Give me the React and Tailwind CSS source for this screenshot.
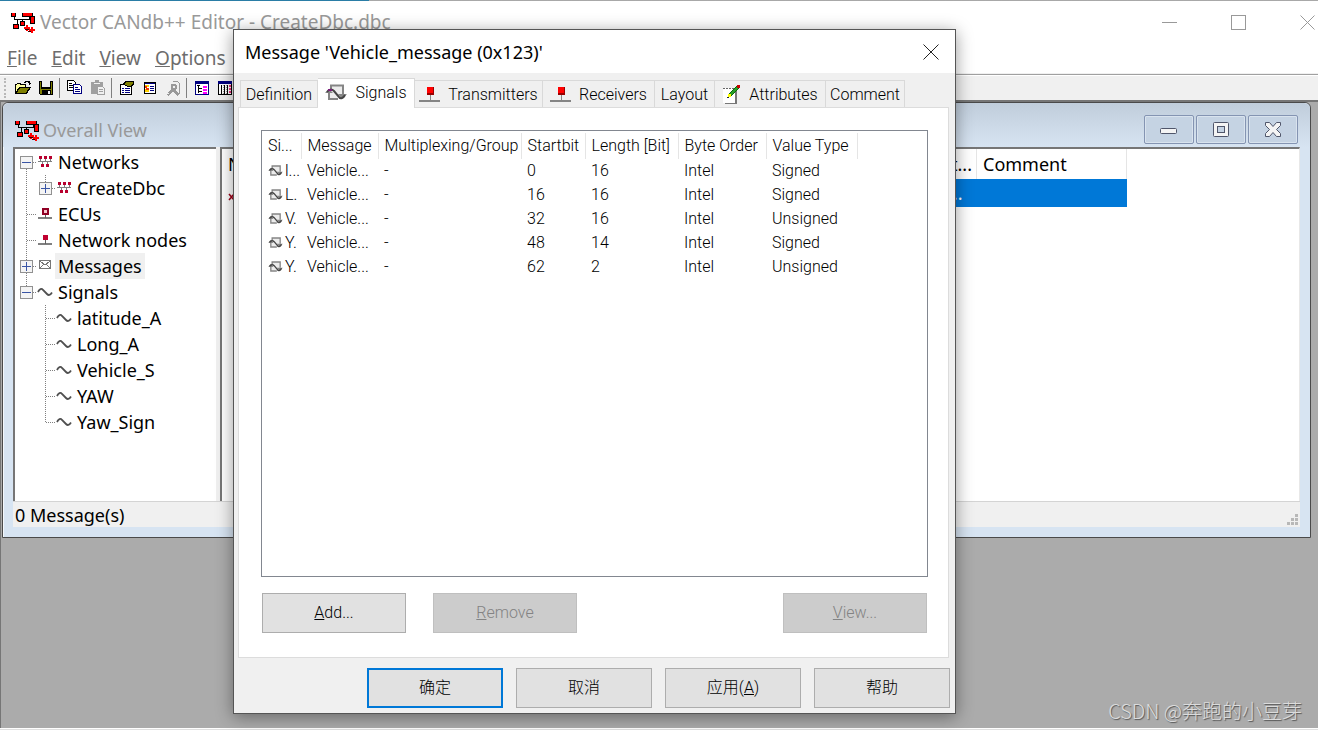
import { useState } from 'react';

const signals = [
  { id: 1, name: 'l...', startbit: 0, length: 16, order: 'Intel', type: 'Signed' },
  { id: 2, name: 'L.', startbit: 16, length: 16, order: 'Intel', type: 'Signed' },
  { id: 3, name: 'V.', startbit: 32, length: 16, order: 'Intel', type: 'Unsigned' },
  { id: 4, name: 'Y.', startbit: 48, length: 14, order: 'Intel', type: 'Signed' },
  { id: 5, name: 'Y.', startbit: 62, length: 2, order: 'Intel', type: 'Unsigned' },
];

const columns = [
  { label: 'Si...', width: 'w-[39px]' },
  { label: 'Message', width: 'w-[77px]' },
  { label: 'Multiplexing/Group', width: 'w-[143px]' },
  { label: 'Startbit', width: 'w-16' },
  { label: 'Length [Bit]', width: 'w-[93px]' },
  { label: 'Byte Order', width: 'w-[88px]' },
  { label: 'Value Type', width: 'w-[91px]' },
];

// guides: one entry per indent cell. up/down = trunk, right = branch, box = expander
const tree = [
  { label: 'Networks', icon: 'network', guides: [{ down: true, right: true, box: '-' }] },
  { label: 'CreateDbc', icon: 'network', guides: [{ up: true, down: true }, { up: true, right: true, box: '+' }] },
  { label: 'ECUs', icon: 'ecu', guides: [{ up: true, down: true, right: true }] },
  { label: 'Network nodes', icon: 'node', guides: [{ up: true, down: true, right: true }] },
  { label: 'Messages', icon: 'mail', selected: true, guides: [{ up: true, down: true, right: true, box: '+' }] },
  { label: 'Signals', icon: 'wave', guides: [{ up: true, right: true, box: '-' }] },
  { label: 'latitude_A', icon: 'wave', guides: [{}, { up: true, down: true, right: true }] },
  { label: 'Long_A', icon: 'wave', guides: [{}, { up: true, down: true, right: true }] },
  { label: 'Vehicle_S', icon: 'wave', guides: [{}, { up: true, down: true, right: true }] },
  { label: 'YAW', icon: 'wave', guides: [{}, { up: true, down: true, right: true }] },
  { label: 'Yaw_Sign', icon: 'wave', guides: [{}, { up: true, right: true }] },
];

const AppIcon = () => (
  <svg width="25" height="21" viewBox="0 0 25 21" shapeRendering="crispEdges" className="shrink-0">
    <path d="M3 5v2h15v-2M6 7v5M11 7v4M18 7h2v-2" fill="none" stroke="#000" />
    <g fill="#000">
      <rect x="0" y="1" width="5" height="4" />
      <rect x="11" y="1" width="11" height="4" />
      <rect x="19" y="4" width="5" height="8" />
      <rect x="2" y="12" width="6" height="5" />
      <rect x="9" y="9" width="5" height="5" />
    </g>
    <g fill="#f00">
      <rect x="1" y="1" width="3" height="3" />
      <rect x="12" y="1" width="9" height="3" />
      <rect x="20" y="5" width="3" height="6" />
      <rect x="3" y="13" width="4" height="3" />
      <rect x="10" y="10" width="3" height="3" />
      <path d="M13 15h6v2h-6zM15 13h2v6h-2zM18 17h6v2h-6zM20 15h2v6h-2z" />
    </g>
    <path d="M14 17h4M17 19h3" stroke="#300" />
  </svg>
);

const TreeIcon = ({ name }) => (
  <svg width="19" height="26" viewBox="0 0 19 26" shapeRendering={name === 'wave' ? 'auto' : 'crispEdges'} className="shrink-0">
    {name === 'network' && (
      <>
        <path d="M2 12.500h14M4.500 9v4M9.500 9v4M14.500 9v4M6.500 13v4M11.500 13v4" stroke="#808080" fill="none" />
        <path d="M3 7h3v3H3zM8 7h3v3H8zM13 7h3v3h-3zM5 15h3v3H5zM10 15h3v3h-3z" fill="#b8002e" />
      </>
    )}
    {name === 'ecu' && (
      <>
        <path d="M2 17h14" stroke="#808080" strokeWidth="2" />
        <path d="M9.500 14v3" stroke="#606060" />
        <rect x="6" y="7" width="7" height="7" fill="#900024" />
        <rect x="8" y="9" width="3" height="3" fill="#f4c8d0" />
      </>
    )}
    {name === 'node' && (
      <>
        <path d="M2 17h14" stroke="#808080" strokeWidth="2" />
        <path d="M9.500 13v4" stroke="#606060" />
        <rect x="7" y="8" width="5" height="5" fill="#c00030" />
      </>
    )}
    {name === 'mail' && (
      <g fill="none" stroke="#777">
        <rect x="3.500" y="7.500" width="11" height="8" />
        <path d="M4 8l5 4l5-4M4 15l4-4M14 15l-4-4" />
      </g>
    )}
    {name === 'wave' && (
      <path d="M2 13c1.500-3 3.500-4 5-2l4 4c1.500 1.500 3 1.500 5-1.500" fill="none" stroke="#505050" strokeWidth="1.800" />
    )}
  </svg>
);

const Guide = ({ up, down, right, box }) => (
  <svg width="19" height="26" viewBox="0 0 19 26" shapeRendering="crispEdges" className="shrink-0">
    <g stroke="#808080" strokeDasharray="1 1">
      {up && <path d="M9.500 0v13" />}
      {down && <path d="M9.500 14v12" />}
      {right && <path d="M10 13.500h9" />}
    </g>
    {box && (
      <>
        <rect x="3.500" y="7.500" width="12" height="12" rx="1" fill="#f4f4f4" stroke="#919191" />
        <path d={box === '+' ? 'M5 13.500h9M9.500 9v9' : 'M5 13.500h9'} stroke="#3a55a5" />
      </>
    )}
  </svg>
);

const SignalIcon = ({ large }) => (
  <svg width={large ? 22 : 15} height={large ? 18 : 12} viewBox="0 0 22 18" className="shrink-0">
    <path d="M4 15V6L6 1.500H18V13" fill="#ececec" />
    <path d="M4 8V15H13M5 1.500H18V10M6 1V5" fill="none" stroke="#858585" strokeWidth="2" />
    <path d="M0 9l4-4 4 4zM13 10h9l-5 5z" fill="#858585" />
    <path d="M2 8c2-3 5-3 7-1l5 6c1 2 4 2 6-2" fill="none" stroke="#444" strokeWidth="2" />
    {large && <path d="M3 6h4" stroke="#7c1d7c" strokeWidth="2" />}
  </svg>
);

const NodeIcon = () => (
  <svg width="21" height="16" viewBox="0 0 21 16" shapeRendering="crispEdges" className="shrink-0">
    <path d="M0 14h21" stroke="#858585" strokeWidth="2" />
    <path d="M11.500 8v5" stroke="#858585" />
    <rect x="8" y="0" width="7" height="8" fill="#900" />
    <rect x="8" y="0" width="6" height="6" fill="#f00" />
  </svg>
);

const AttributeIcon = () => (
  <svg width="19" height="19" viewBox="0 0 19 19" shapeRendering="crispEdges" className="shrink-0">
    <rect x="3" y="4" width="12" height="15" fill="#777" />
    <rect x="1" y="3" width="12" height="15" fill="#fff" />
    <path d="M1 3.500h11" stroke="#666" strokeDasharray="2 1" />
    <path d="M7 11L16 2" stroke="#0a6a0a" strokeWidth="4" />
    <path d="M8 10L16 2" stroke="#28a028" strokeWidth="2" />
    <path d="M6 9h3v3H6z" fill="#ff0" />
    <path d="M15 0h3v3h-3z" fill="#c00" />
    <path d="M5 12h2v1H5z" fill="#222" />
  </svg>
);

const tabs = [
  { label: 'Definition', width: 'w-[78px]' },
  { label: 'Signals', icon: <SignalIcon large />, width: 'w-[97px]' },
  { label: 'Transmitters', icon: <NodeIcon />, width: 'w-32' },
  { label: 'Receivers', icon: <NodeIcon />, width: 'w-28' },
  { label: 'Layout', width: 'w-[60px]' },
  { label: 'Attributes', icon: <AttributeIcon />, width: 'w-[111px]' },
  { label: 'Comment', width: 'w-[79px]' },
];

const tools = [
  {
    title: 'Open',
    art: (
      <>
        <path d="M0 14V4h2v-1h4v1h5v3h5l-4 7z" fill="#000" />
        <path d="M1 12V5h1v-1h3v1h5v2H4z" fill="#ffffa0" />
        <path d="M2 13l3-5h9l-3 5z" fill="#808000" />
        <path d="M9 2.500h1v-1h3v1h1v1h2M14.500 1v4" fill="none" stroke="#000" />
      </>
    ),
  },
  {
    title: 'Save',
    art: (
      <>
        <path d="M1 1h14v14H2l-1-1z" fill="#000" />
        <path d="M2 2h1v7h10V2h1v12H2z" fill="#808000" />
        <path d="M4 1h8v6H4z" fill="#f0f0f0" />
        <path d="M4 10h9v5H4z" fill="#000" />
        <path d="M10 11h2v3h-2z" fill="#f0f0f0" />
      </>
    ),
  },
  null,
  {
    title: 'Copy',
    art: (
      <>
        <path d="M.5.500h6l2 2v8h-8z" fill="#fff" stroke="#000" />
        <path d="M2 3.500h3M2 5.500h5M2 7.500h5" stroke="#000" />
        <path d="M6.500 4.500h6l2 2v7h-8z" fill="#fff" stroke="#000080" />
        <path d="M8 7.500h3M8 9.500h5M8 11.500h5" stroke="#000080" />
      </>
    ),
  },
  {
    title: 'Paste',
    art: (
      <>
        <path d="M1 2h4V0h4v2h4v12H1z" fill="#a0a0a0" />
        <path d="M4 3h6" stroke="#f0f0f0" />
        <path d="M7.500 6.500h5l2 2v6h-7z" fill="#f0f0f0" stroke="#a0a0a0" />
        <path d="M9 9.500h4M9 11.500h4" stroke="#a0a0a0" />
      </>
    ),
  },
  null,
  {
    title: 'Properties',
    art: (
      <>
        <path d="M1.500 4.500h11v10h-11z" fill="#fff" stroke="#000" />
        <path d="M3 8.500h2M6 8.500h5M3 10.500h2M6 10.500h5M3 12.500h2M6 12.500h5" stroke="#000080" />
        <path d="M3 4l3-3h9v4l-3 2H9z" fill="#000" />
        <path d="M5 4l2-2h7v2l-3 2H9z" fill="#808000" />
      </>
    ),
  },
  {
    title: 'List',
    art: (
      <>
        <path d="M2.500 2.500h11v11h-11z" fill="#fff" stroke="#000" />
        <path d="M3 3.500h10M8 6.500h4M8 8.500h4M8 10.500h4" stroke="#000080" />
        <path d="M3 5h4v2H3zM3 9h4v3H3z" fill="#ffd000" />
        <path d="M3 6h2v2h2v2H4z" fill="#f03000" />
      </>
    ),
  },
  {
    title: 'Tools',
    art: (
      <>
        <path d="M7.500 1.500h5l2 2v10h-5" fill="none" stroke="#999" />
        <path d="M6 4h4l2 2v3l-2 1 4 4-2 2-4-5-5 5-2-2 5-5z" fill="#999" />
        <path d="M8 6h2v2H8zM2 13h2v1H2z" fill="#f0f0f0" />
      </>
    ),
  },
  null,
  {
    title: 'Overall View',
    art: (
      <>
        <path d="M1.500 1.500h13v13h-13z" fill="#fff" stroke="#000080" />
        <path d="M1 2.500h14" stroke="#000080" strokeWidth="3" />
        <path d="M3 5.500h3M4.500 6v7M5 8.500h3M5 11.500h3" stroke="#000" />
        <path d="M9 6.500h4M9 9.500h4M9 12.500h4" stroke="#f0f" strokeWidth="2" />
      </>
    ),
  },
  {
    title: 'Value Tables',
    art: (
      <>
        <path d="M1.500 1.500h13v13h-13z" fill="#fff" stroke="#000" />
        <path d="M1 2.500h14" stroke="#000080" strokeWidth="3" />
        <path d="M4.500 5v9M7.500 5v9M10.500 5v9" stroke="#000" />
        <path d="M6 5v9M9 5v9" stroke="#999" strokeDasharray="1 1" />
        <path d="M13 5v9" stroke="#f03080" strokeWidth="2" strokeDasharray="2 1" />
      </>
    ),
  },
];

const Toolbar = () => (
  <div className="flex items-center h-6 pl-1 bg-[#f0f0f0] border-t border-white box-content">
    <div className="w-[7px] h-5 border-l-2 border-dotted border-[#b8b8b8]" />
    {tools.map((tool, i) => tool ? (
      <button key={tool.title} title={tool.title} className="w-[23px] h-6 flex items-center justify-center">
        <svg width="16" height="16" viewBox="0 0 16 16" shapeRendering="crispEdges">{tool.art}</svg>
      </button>
    ) : (
      <div key={i} className="w-px h-5 ml-[2px] mr-[3px] bg-[#808080]" />
    ))}
  </div>
);

const MainTitle = () => (
  <div className="flex items-center h-[43px] pl-[11px] pr-[3px]">
    <AppIcon />
    <h1 className="ml-1 text-[19px] text-[#999]">Vector CANdb++ Editor - CreateDbc.dbc</h1>
    <div className="ml-auto flex gap-[54px] text-[#999]">
      <button aria-label="Minimize"><svg width="15" height="15" viewBox="0 0 15 15"><path d="M0 7.500h15" stroke="currentColor" /></svg></button>
      <button aria-label="Maximize"><svg width="15" height="15" viewBox="0 0 15 15"><rect x=".5" y=".5" width="14" height="14" fill="none" stroke="currentColor" /></svg></button>
      <button aria-label="Close"><svg width="15" height="15" viewBox="0 0 15 15"><path d="M.5.500l14 14M14.500.500l-14 14" stroke="currentColor" /></svg></button>
    </div>
  </div>
);

const ChildButton = ({ label, children }) => (
  <button aria-label={label} className="w-[50px] h-[29px] flex items-center justify-center rounded-[2px] border border-[#8494b2] bg-[#c5d3e3] shadow-[inset_0_0_0_1px_#d9e3ee]">
    <svg width="18" height="17" viewBox="0 0 18 17" fill="#f4f4f4" stroke="#50566b">{children}</svg>
  </button>
);

const OverallView = () => (
  <section className="ml-px mr-[7px] rounded-t-md border border-[#4a4a4a] bg-[#d7e4f2] shadow-[inset_1px_1px_0_#f4f8fc]">
    <div className="flex items-center h-11 pl-[12px] pr-3 rounded-t-md bg-linear-to-b from-[#c0cddb] to-[#d7e4f2]">
      <div className="flex items-center pt-[10px]">
        <AppIcon />
        <h2 className="ml-[3px] text-lg text-[#999]">Overall View</h2>
      </div>
      <div className="ml-auto flex gap-[2px] pt-[9px]">
        <ChildButton label="Minimize child"><rect x=".5" y="7.500" width="16" height="5" rx="1" /></ChildButton>
        <ChildButton label="Restore child">
          <rect x="1.500" y="1.500" width="15" height="14" rx="1" />
          <rect x="5.500" y="5.500" width="7" height="6" fill="#c5d3e3" />
        </ChildButton>
        <ChildButton label="Close child">
          <path d="M1.500 1.500h4l3.500 4 3.500-4h4v3l-4 4 4 4v3h-4l-3.500-4-3.500 4h-4v-3l4-4-4-4z" strokeLinejoin="round" />
        </ChildButton>
      </div>
    </div>
    <div className="ml-[10px] mr-[10px] mb-[10px] bg-[#f0f0f0]">
      <div className="flex h-[354px]">
        <div className="w-[203px] shrink-0 pl-[2px] border-t-2 border-l-2 border-[#767676] bg-white">
          {tree.map(node => (
            <div key={node.label} className="flex items-center h-[26px]">
              {node.guides.map((g, i) => <Guide key={i} {...g} />)}
              <TreeIcon name={node.icon} />
              <span className={`px-[3px] text-lg leading-[26px] ${node.selected ? 'bg-[#f0f0f0]' : ''}`}>{node.label}</span>
            </div>
          ))}
        </div>
        <div className="flex-1 ml-1 border-t-2 border-l-2 border-[#767676] border-r border-r-[#e8e8e8] bg-white">
          <table className="table-fixed w-[905px] text-lg">
            <thead>
              <tr className="h-[30px]">
                <th className="w-[600px] pl-[6px] text-left font-normal">Name</th>
                <th className="pr-1 text-right font-normal border-r border-[#e5e5e5]">t...</th>
                <th className="w-[150px] pl-[6px] text-left font-normal border-r border-[#e5e5e5]">Comment</th>
              </tr>
            </thead>
            <tbody>
              <tr className="h-7 bg-[#0078d7] text-white">
                <td className="p-0 bg-white text-[#a00018]">
                  <svg width="14" height="28" viewBox="0 0 14 28"><path d="M7 15l5 6M12 15l-5 6" stroke="currentColor" strokeWidth="1.500" /></svg>
                </td>
                <td className="p-0 pr-[14px] text-right">...</td>
                <td />
              </tr>
            </tbody>
          </table>
        </div>
      </div>
      <div className="flex items-center justify-between h-[26px] pl-[2px] pr-[2px] border-t border-[#d4d4d4] text-lg">
        <span>0 Message(s)</span>
        <svg width="11" height="11" viewBox="0 0 11 11" fill="#b8b8b8" className="self-end mb-[2px]">
          <path d="M8 0h3v3H8zM4 4h3v3H4zM8 4h3v3H8zM0 8h3v3H0zM4 8h3v3H4zM8 8h3v3H8z" />
        </svg>
      </div>
    </div>
  </section>
);

const PushButton = ({ className, ...props }) => (
  <button
    className={`h-10 border bg-[#e1e1e1] border-[#adadad] disabled:bg-[#ccc] disabled:border-[#bfbfbf] disabled:text-[#838383] ${className}`}
    {...props}
  />
);

const MessageDialog = () => {
  const [active, setActive] = useState('Signals');

  return (
    <div
      role="dialog"
      aria-labelledby="dialog-title"
      className="absolute left-[233px] top-[29px] w-[723px] border border-[#555] bg-[#f0f0f0] shadow-[0_3px_16px_rgba(0,0,0,0.4)] font-[Roboto,'Noto_Sans_CJK_SC',sans-serif] text-base font-light"
    >
      <div className="flex items-center justify-between h-[43px] pl-[11px] pr-4 bg-white">
        <h2 id="dialog-title" className="font-['Noto_Sans',sans-serif] text-lg font-normal">Message 'Vehicle_message (0x123)'</h2>
        <button aria-label="Close dialog">
          <svg width="16" height="16" viewBox="0 0 16 16"><path d="M.5.500l15 15M15.500.500l-15 15" stroke="#222" /></svg>
        </button>
      </div>

      <div role="tablist" className="flex items-end h-[34px] pl-[6px]">
        {tabs.map(tab => (
          <button
            key={tab.label}
            role="tab"
            aria-selected={active === tab.label}
            onClick={() => setActive(tab.label)}
            className={`flex items-center justify-center border-r border-t border-[#d9d9d9] whitespace-nowrap ${tab.width} ${tab.icon ? 'gap-2' : ''} ${active === tab.label ? 'h-[30px] pb-[2px] bg-white relative top-px' : 'h-[27px] pt-px first:border-l'}`}
          >
            {tab.icon}
            {tab.label}
          </button>
        ))}
      </div>

      <div role="tabpanel" className="mx-1 mr-[6px] px-[22px] pr-5 pt-[22px] pb-6 border border-[#dcdcdc] bg-white">
        <div className="h-[447px] border border-[#828790]">
          <table className="table-fixed w-[595px] mt-[2px]">
            <thead>
              <tr className="h-[26px]">
                {columns.map(c => (
                  <th key={c.label} className={`p-0 pl-[6px] text-left font-light whitespace-nowrap border-r border-[#e5e5e5] ${c.width}`}>{c.label}</th>
                ))}
              </tr>
            </thead>
            <tbody>
              {signals.map(s => (
                <tr key={s.id} className="h-6">
                  <td className="p-0 pl-[6px]">
                    <div className="flex items-center gap-[2px]">
                      <SignalIcon />
                      {s.name}
                    </div>
                  </td>
                  <td className="p-0 pl-[6px]">Vehicle...</td>
                  <td className="p-0 pl-[6px]">-</td>
                  <td className="p-0 pl-[6px]">{s.startbit}</td>
                  <td className="p-0 pl-[6px]">{s.length}</td>
                  <td className="p-0 pl-[6px]">{s.order}</td>
                  <td className="p-0 pl-[6px]">{s.type}</td>
                </tr>
              ))}
            </tbody>
          </table>
        </div>
        <div className="flex mt-4 px-px">
          <PushButton className="w-36"><u>A</u>dd...</PushButton>
          <PushButton className="w-36 ml-[27px]" disabled><u>R</u>emove</PushButton>
          <PushButton className="w-36 ml-auto" disabled><u>V</u>iew...</PushButton>
        </div>
      </div>

      <div className="flex justify-end gap-[13px] pt-[10px] pb-[5px] pr-[5px]">
        <PushButton className="w-[136px] outline-2 -outline-offset-2 outline-[#0078d7]">确定</PushButton>
        <PushButton className="w-[136px]">取消</PushButton>
        <PushButton className="w-[136px]">应用(<u>A</u>)</PushButton>
        <PushButton className="w-[136px]">帮助</PushButton>
      </div>
    </div>
  );
};

const App = () => (
  <div className="relative flex flex-col h-screen overflow-hidden bg-white font-['Noto_Sans',sans-serif] text-black">
    <div className="h-px shrink-0 bg-linear-to-r from-[#2a7da6] from-28% to-[#a8a8a8] to-28%" />
    <MainTitle />
    <nav className="flex items-center gap-[14px] h-[29px] pl-[7px] text-[19px] text-[#6d6d6d]">
      <button><u>F</u>ile</button>
      <button><u>E</u>dit</button>
      <button><u>V</u>iew</button>
      <button><u>O</u>ptions</button>
    </nav>
    <div className="h-[2px] shrink-0 bg-[#f0f0f0] border-b border-[#a0a0a0]" />
    <Toolbar />
    <main className="flex-1 border-t-2 border-l border-[#767676] bg-[#ababab]">
      <OverallView />
    </main>
    <div className="h-[2px] shrink-0 border-t border-white bg-[#e0e0e0]" />
    <MessageDialog />
    <div className="absolute right-4 bottom-[5px] text-xl leading-7 text-[#dcdcdc] font-['Noto_Sans_CJK_SC',sans-serif] font-light [text-shadow:1px_1px_1px_#555]">
      CSDN @奔跑的小豆芽
    </div>
  </div>
);

export default App;
